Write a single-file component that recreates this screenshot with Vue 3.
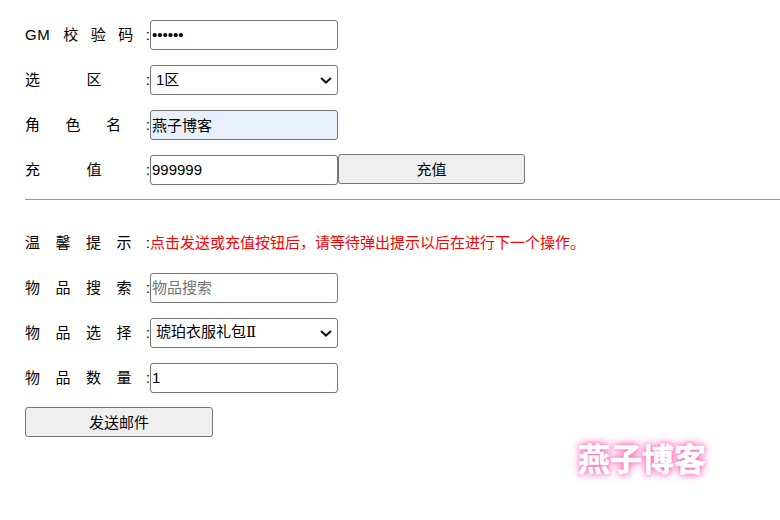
<script setup>
const chevron = 'M1 1L6 5.6L11 1'
</script>

<template>
  <main class="page">
    <form class="form" @submit.prevent>
      <div class="row">
        <label class="label"><span class="name gm"><span class="gm-prefix">GM</span><span v-for="c in '校验码'" :key="c">{{ c }}</span></span><span class="colon">:</span></label>
        <input class="field" type="password" value="123456" />
      </div>
      <div class="row">
        <label class="label"><span class="name two"><span v-for="c in '选区'" :key="c">{{ c }}</span></span><span class="colon">:</span></label>
        <div class="select-wrap">
          <select class="field select"><option>1区</option></select>
          <svg class="chevron" width="12" height="7" viewBox="0 0 12 7"><path :d="chevron" /></svg>
        </div>
      </div>
      <div class="row">
        <label class="label"><span class="name three"><span v-for="c in '角色名'" :key="c">{{ c }}</span></span><span class="colon">:</span></label>
        <input class="field filled" type="text" value="燕子博客" />
      </div>
      <div class="row">
        <label class="label"><span class="name two"><span v-for="c in '充值'" :key="c">{{ c }}</span></span><span class="colon">:</span></label>
        <input class="field" type="text" value="999999" />
        <button class="btn btn-recharge" type="button">充值</button>
      </div>
      <hr class="rule" />
      <div class="row">
        <label class="label"><span class="name four"><span v-for="c in '温馨提示'" :key="c">{{ c }}</span></span><span class="colon">:</span></label>
        <span class="tip">点击发送或充值按钮后，请等待弹出提示以后在进行下一个操作。</span>
      </div>
      <div class="row">
        <label class="label"><span class="name four"><span v-for="c in '物品搜索'" :key="c">{{ c }}</span></span><span class="colon">:</span></label>
        <input class="field" type="text" placeholder="物品搜索" />
      </div>
      <div class="row">
        <label class="label"><span class="name four"><span v-for="c in '物品选择'" :key="c">{{ c }}</span></span><span class="colon">:</span></label>
        <div class="select-wrap">
          <select class="field select cjk"><option>琥珀衣服礼包Ⅱ</option></select>
          <svg class="chevron" width="12" height="7" viewBox="0 0 12 7"><path :d="chevron" /></svg>
        </div>
      </div>
      <div class="row">
        <label class="label"><span class="name four"><span v-for="c in '物品数量'" :key="c">{{ c }}</span></span><span class="colon">:</span></label>
        <input class="field" type="text" value="1" />
      </div>
      <button class="btn btn-send" type="button">发送邮件</button>
    </form>
    <div class="watermark">燕子博客</div>
  </main>
</template>

<style scoped>
.page {
  position: relative;
  width: 780px;
  height: 520px;
  overflow: hidden;
  background: #fff;
  font-family: "Liberation Sans", "Noto Sans CJK SC", sans-serif;
  font-size: 15px;
  color: #000;
}
.form {
  display: flex;
  flex-direction: column;
  gap: 15px;
  padding: 20px 0 0 25px;
}
.row {
  display: flex;
  align-items: center;
  height: 30px;
}
.label {
  display: flex;
  align-items: baseline;
  justify-content: space-between;
  width: 125px;
  flex: none;
  padding-bottom: 4px;
  white-space: nowrap;
}
.name {
  display: flex;
  align-items: baseline;
}
.colon {
  flex: none;
}
.gm { gap: 12.5px; }
.gm-prefix { letter-spacing: 0.5px; margin-right: 0.5px; }
.two { gap: 46.5px; }
.three { gap: 25.5px; }
.four { gap: 15.5px; }
.field {
  box-sizing: border-box;
  width: 188px;
  height: 30px;
  padding: 0 2px 2px 1px;
  border: 1px solid #767676;
  border-radius: 3px;
  background: #fff;
  color: #000;
  font: inherit;
  outline: none;
}
.field::placeholder {
  color: #757575;
}
.select-wrap {
  position: relative;
  width: 188px;
  height: 30px;
}
.select {
  display: block;
  padding-left: 5px;
  appearance: none;
}
.cjk {
  font-family: "DejaVu Serif", "Noto Sans CJK SC", sans-serif;
}
.chevron {
  position: absolute;
  top: 12px;
  right: 6px;
  fill: none;
  stroke: #111;
  stroke-width: 2;
  pointer-events: none;
}
.filled {
  background: #e8f0fe;
}
.tip {
  padding-bottom: 4px;
  color: #f00;
  white-space: nowrap;
}
.rule {
  height: 1px;
  margin: -1px 0 13px;
  border: 0;
  background: #999;
}
.btn {
  box-sizing: border-box;
  width: 187px;
  height: 30px;
  padding: 0 6px 2px;
  border: 1px solid #767676;
  border-radius: 3px;
  background: #efefef;
  color: #000;
  font: inherit;
}
.btn-recharge {
  margin-top: -2px;
}
.btn-send {
  width: 188px;
  margin-top: -1px;
}
.watermark {
  position: absolute;
  left: 578px;
  top: 441px;
  color: #fff;
  font-size: 32px;
  font-weight: 700;
  line-height: 38px;
  white-space: nowrap;
  -webkit-text-stroke: 0.6px #fff;
  text-shadow: 0 0 4px #ff5fb4, 0 0 8px #ff7cc4, 0 0 10px #ffa6d8;
}
</style>
